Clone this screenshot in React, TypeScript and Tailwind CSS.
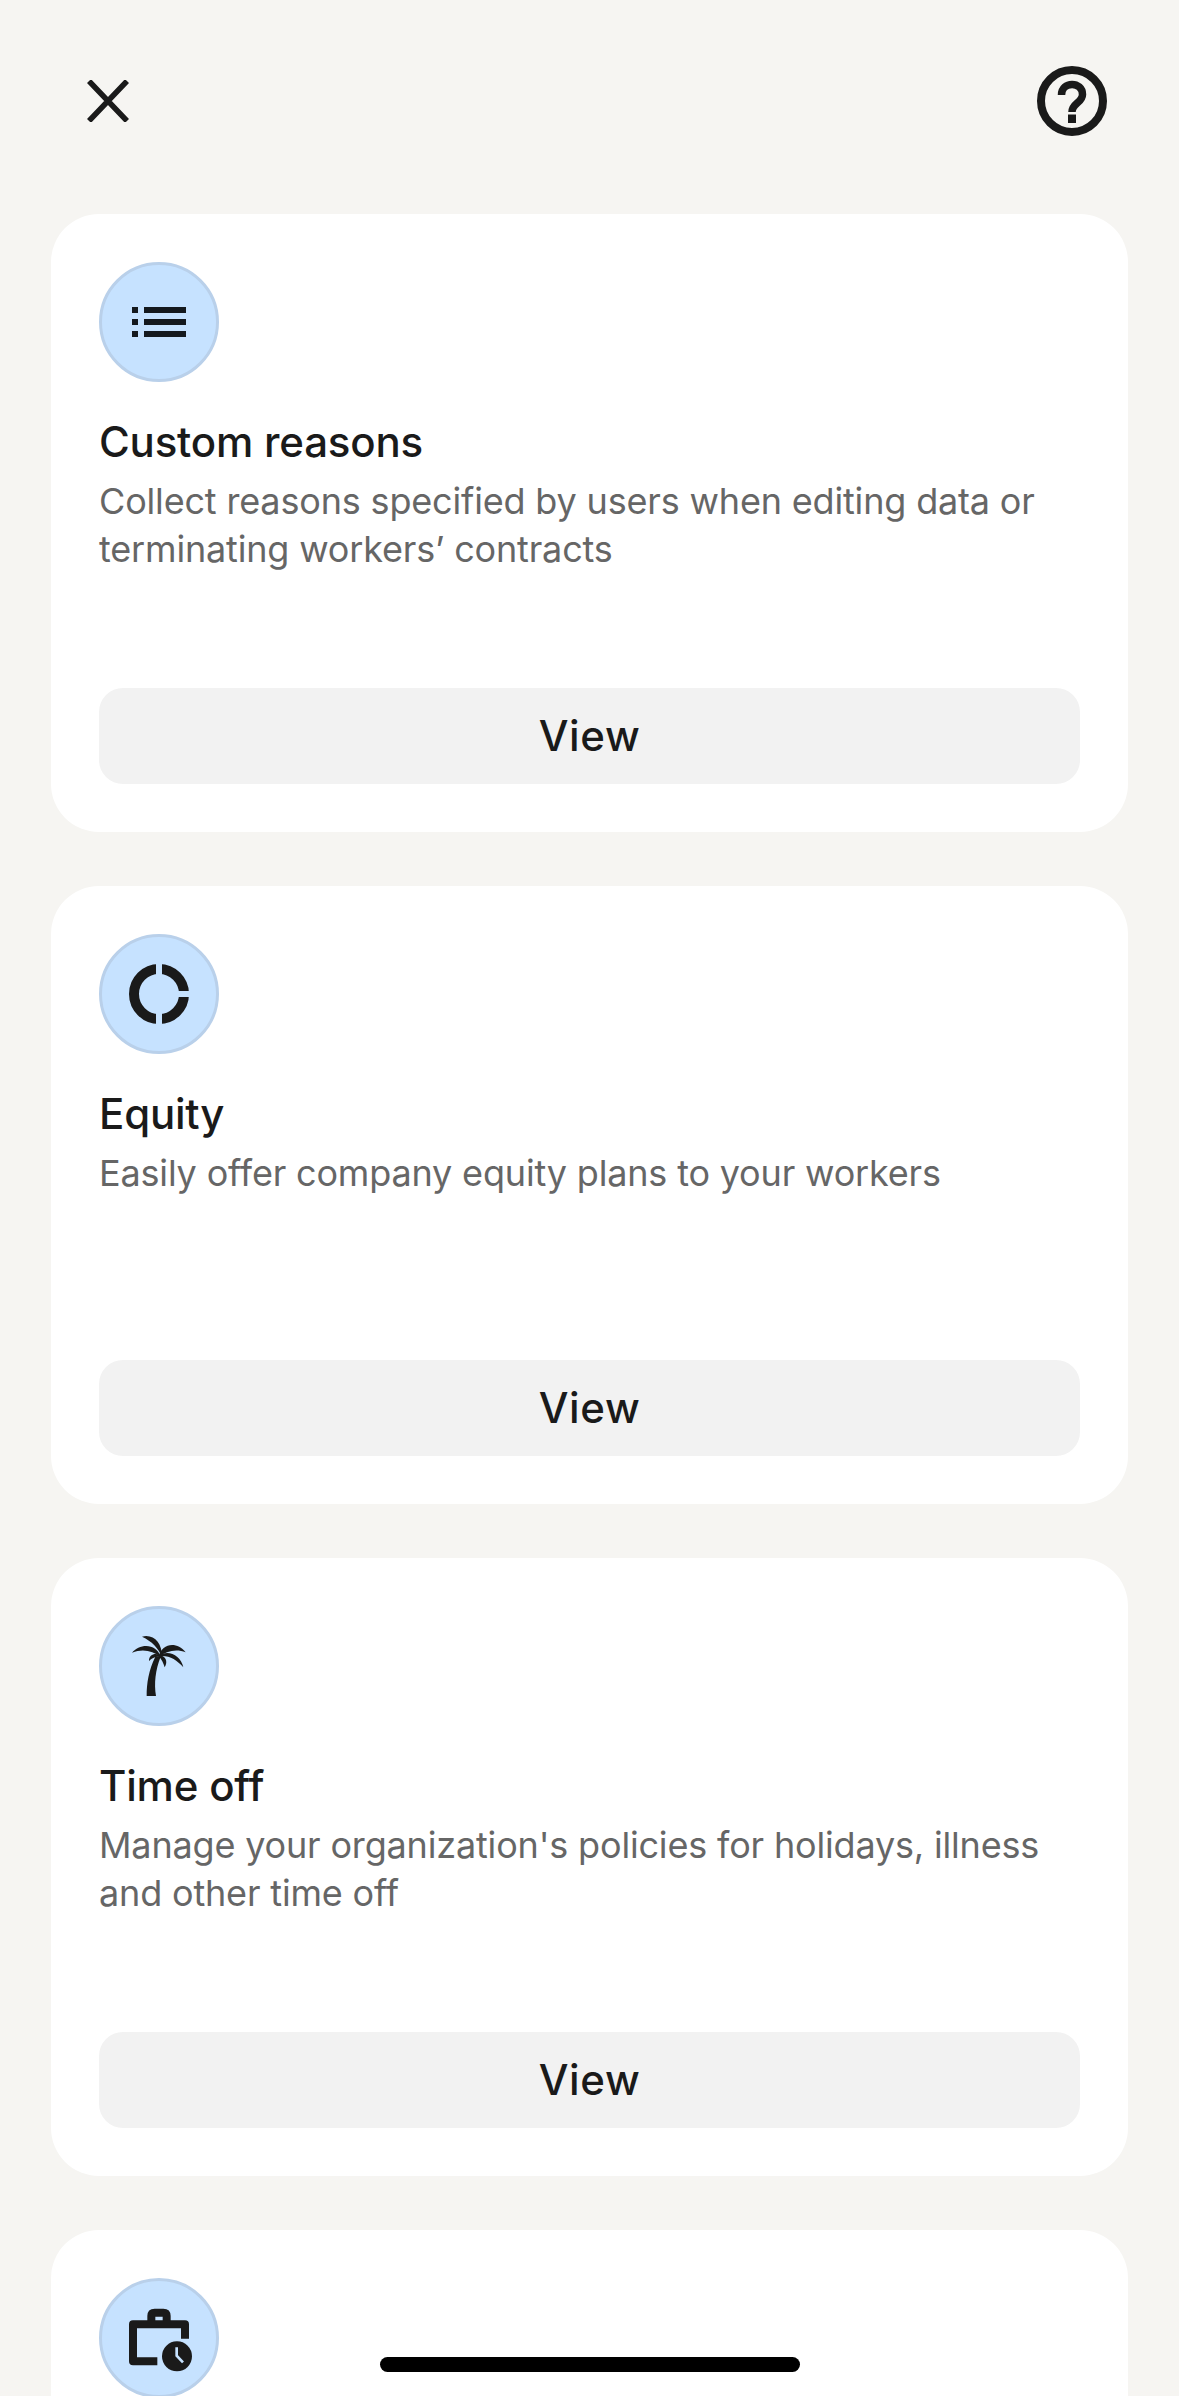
const font = { fontFamily: "Inter, 'Noto Sans', sans-serif" };

function IconCircle({ children }: { children: React.ReactNode }) {
  return (
    <div className="flex h-[120px] w-[120px] shrink-0 items-center justify-center rounded-full border-[3px] border-[#b9d0ea] bg-[#c6e2ff]">
      {children}
    </div>
  );
}

function ListIcon() {
  return (
    <svg width="54" height="30" viewBox="0 0 54 30" fill="#14191e">
      <rect x="0" y="0" width="6" height="6" />
      <rect x="12" y="0" width="42" height="6" />
      <rect x="0" y="12" width="6" height="6" />
      <rect x="12" y="12" width="42" height="6" />
      <rect x="0" y="24" width="6" height="6" />
      <rect x="12" y="24" width="42" height="6" />
    </svg>
  );
}

function DonutIcon() {
  return (
    <svg width="60" height="60" viewBox="0 0 60 60">
      <circle cx="30" cy="30" r="25" fill="none" stroke="#1a1a1a" strokeWidth="10" />
      <rect x="27" y="0" width="6" height="60" fill="#c6e2ff" />
      <rect x="33" y="27" width="27" height="6" fill="#c6e2ff" />
    </svg>
  );
}

function PalmIcon() {
  return (
    <svg width="60" height="60" viewBox="147 138 180 180" fill="#1a1a1a" className="overflow-visible">
      <path d="M200 318 L228 318 C222 280 226 240 242 200 L226 200 C206 240 200 280 200 318Z" />
      <path d="M186 140 C220 131 247 158 246 201 C235 174 216 154 186 140Z" />
      <path d="M156 188 C178 160 230 158 242 201 C218 182 188 176 156 188Z" />
      <path d="M317 187 C290 153 246 159 235 201 C260 182 290 176 317 187Z" />
      <path d="M310 232 C303 196 262 176 235 199 C265 194 289 208 310 232Z" />
      <path d="M207 213 C206 191 233 185 245 201 C227 198 216 204 207 213Z" />
      <path d="M254 232 C266 213 255 194 233 196 C246 208 250 220 254 232Z" />
    </svg>
  );
}

function CaseIcon() {
  return (
    <svg width="60" height="60" viewBox="387 323 180 180" className="overflow-visible">
      <path d="M555 415 L555 372 H399 V483 H472" fill="none" stroke="#1a1a1a" strokeWidth="24" strokeLinejoin="round" />
      <path d="M454 362 V347 Q454 337 464 337 H490 Q500 337 500 347 V362" fill="none" stroke="#1a1a1a" strokeWidth="24" />
      <circle cx="531" cy="468" r="45" fill="#1a1a1a" />
      <path d="M530 441 V466 L549 486" fill="none" stroke="#c6e2ff" strokeWidth="8" />
    </svg>
  );
}

function Card({ icon, title, lines }: { icon: React.ReactNode; title?: string; lines?: string[] }) {
  return (
    <section className="flex h-[618px] shrink-0 flex-col rounded-[48px] bg-white p-[48px]">
      <IconCircle>{icon}</IconCircle>
      {title && (
        <>
          <h2 className="mt-[33px] text-[42px] leading-[54px] font-[450] tracking-[-0.2px] text-[#1a1a1a]">{title}</h2>
          <div className="mt-[8px] text-[36px] leading-[48px] tracking-[-0.17px] text-[#666666]">
            {lines?.map((l) => <p key={l}>{l}</p>)}
          </div>
          <button className="mt-auto h-[96px] w-full rounded-[24px] bg-[#f2f2f2] pb-[2px] text-[42px] font-[450] tracking-[0.015em] text-[#1a1a1a]">
            View
          </button>
        </>
      )}
    </section>
  );
}

export default function App() {
  return (
    <main style={font} className="relative h-[2396px] w-[1179px] overflow-hidden bg-[#f6f5f2]">
      <header className="flex h-[214px] items-start justify-between pt-[65px] pr-[71px] pl-[87px]">
        <svg width="42" height="42" viewBox="0 0 42 42" className="mt-[15px]" fill="none" stroke="#1a1a1a" strokeWidth="5.5">
          <path d="M2 1 L40 41 M40 1 L2 41" />
        </svg>
        <svg width="72" height="72" viewBox="0 0 72 72" fill="none" stroke="#1a1a1a">
          <circle cx="36" cy="36" r="31" strokeWidth="8" />
          <path d="M25.5 30 C25.5 16 46.5 16 46.5 29.5 C46.5 38 36 38 36 47" strokeWidth="7.5" />
          <rect x="32" y="49.5" width="8" height="8.5" fill="#1a1a1a" stroke="none" />
        </svg>
      </header>
      <div className="flex flex-col gap-[54px] px-[51px]">
        <Card
          icon={<ListIcon />}
          title="Custom reasons"
          lines={["Collect reasons specified by users when editing data or", "terminating workers’ contracts"]}
        />
        <Card icon={<DonutIcon />} title="Equity" lines={["Easily offer company equity plans to your workers"]} />
        <Card
          icon={<PalmIcon />}
          title="Time off"
          lines={["Manage your organization's policies for holidays, illness", "and other time off"]}
        />
        <Card icon={<CaseIcon />} />
      </div>
      <div className="absolute top-[2357px] left-[380px] h-[15px] w-[420px] rounded-full bg-black" />
    </main>
  );
}
